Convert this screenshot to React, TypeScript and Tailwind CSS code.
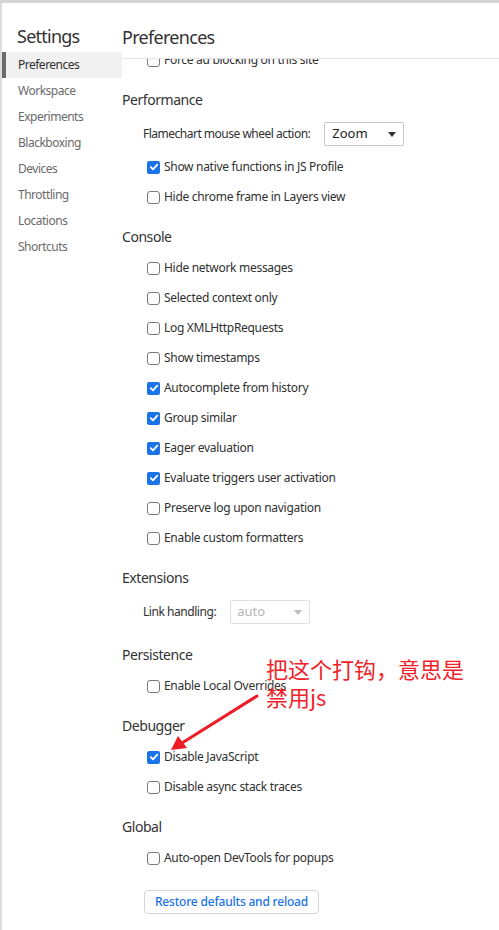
import React from "react";

const FONT = { fontFamily: '"Noto Sans", "Open Sans", sans-serif' };

function Check({ checked }: { checked?: boolean }) {
  if (checked) {
    return (
      <span className="flex h-[13px] w-[13px] shrink-0 items-center justify-center rounded-[2px] bg-[#1a73e8]">
        <svg width="10" height="10" viewBox="0 0 10 10">
          <path d="M1.8 5.2 L4 7.4 L8.3 2.6" fill="none" stroke="#fff" strokeWidth="1.8" strokeLinecap="round" strokeLinejoin="round" />
        </svg>
      </span>
    );
  }
  return <span className="h-[13px] w-[13px] shrink-0 rounded-[3px] border border-[#7a7a7a] bg-white" />;
}

function Row({ label, checked }: { label: string; checked?: boolean }) {
  return (
    <div className="flex h-[30px] items-center pl-[25px]">
      <Check checked={checked} />
      <span className="ml-[4px] text-[12px] tracking-[-0.3px] text-[#303030]">{label}</span>
    </div>
  );
}

function Heading({ title }: { title: string }) {
  return (
    <div className="pb-[7px] pt-[16px]">
      <div className="h-[18px] text-[14px] leading-[18px] tracking-[-0.45px] text-[#333]">{title}</div>
    </div>
  );
}

function Caret({ color }: { color: string }) {
  return (
    <svg width="8" height="5" viewBox="0 0 8 5">
      <path d="M0 0 L8 0 L4 5 Z" fill={color} />
    </svg>
  );
}

export default function App() {
  const nav = ["Preferences", "Workspace", "Experiments", "Blackboxing", "Devices", "Throttling", "Locations", "Shortcuts"];
  return (
    <div className="relative h-[930px] w-[499px] overflow-hidden border-t-[3px] border-[#d4d4d4] bg-white" style={FONT}>
      <div className="flex h-full border-l-2 border-[#dcdcdc]">
        <div className="w-[120px] shrink-0">
          <div className="pl-[15px] pt-[22px] text-[18px] leading-[22px] tracking-[-0.75px] text-[#333]">Settings</div>
          <div className="mt-[5px]">
            {nav.map((n, i) => (
              <div
                key={n}
                className={
                  i === 0
                    ? "flex h-[26px] items-center border-l-[4px] border-[#6b6b6b] bg-[#f1f1f1] pl-[12px] text-[12px] tracking-[-0.5px] text-[#303030]"
                    : "flex h-[26px] items-center pl-[16px] text-[12px] tracking-[-0.5px] text-[#6a6a6a]"
                }
              >
                {n}
              </div>
            ))}
          </div>
        </div>
        <div className="flex min-w-0 flex-1 flex-col">
          <div className="h-[56px] shrink-0 border-b border-[#e3e3e3]">
            <div className="pt-[23px] text-[18px] leading-[22px] tracking-[-0.7px] text-[#333]">Preferences</div>
          </div>
          <div className="flex-1 overflow-hidden">
            <div className="-mt-[14px]">
              <Row label="Force ad blocking on this site" />
              <Heading title="Performance" />
              <div className="flex h-[36px] items-center pl-[21px]">
                <span className="text-[12px] tracking-[-0.5px] text-[#303030]">Flamechart mouse wheel action:</span>
                <div className="ml-[14px] flex h-[24px] w-[80px] items-center justify-between rounded-[2px] border border-[#c6c6c6] bg-white pl-[7px] pr-[7px]">
                  <span className="text-[13px] text-[#222]">Zoom</span>
                  <Caret color="#333" />
                </div>
              </div>
              <Row label="Show native functions in JS Profile" checked />
              <Row label="Hide chrome frame in Layers view" />
              <Heading title="Console" />
              <Row label="Hide network messages" />
              <Row label="Selected context only" />
              <Row label="Log XMLHttpRequests" />
              <Row label="Show timestamps" />
              <Row label="Autocomplete from history" checked />
              <Row label="Group similar" checked />
              <Row label="Eager evaluation" checked />
              <Row label="Evaluate triggers user activation" checked />
              <Row label="Preserve log upon navigation" />
              <Row label="Enable custom formatters" />
              <Heading title="Extensions" />
              <div className="flex h-[36px] items-center pl-[21px]">
                <span className="text-[12px] tracking-[-0.45px] text-[#303030]">Link handling:</span>
                <div className="ml-[14px] flex h-[24px] w-[80px] items-center justify-between rounded-[2px] border border-[#e0e0e0] bg-white pl-[6px] pr-[7px]">
                  <span className="text-[13px] text-[#b4b4b4]">auto</span>
                  <Caret color="#bdbdbd" />
                </div>
              </div>
              <Heading title="Persistence" />
              <Row label="Enable Local Overrides" />
              <Heading title="Debugger" />
              <Row label="Disable JavaScript" checked />
              <Row label="Disable async stack traces" />
              <Heading title="Global" />
              <Row label="Auto-open DevTools for popups" />
              <div className="pl-[22px] pt-[17px]">
                <button className="flex h-[24px] w-[175px] items-center justify-center rounded-[4px] border border-[#d6d6d6] bg-white text-[12px] font-medium tracking-[-0.2px] text-[#1a73e8]">
                  Restore defaults and reload
                </button>
              </div>
            </div>
          </div>
        </div>
      </div>

      <div
        className="absolute left-[266px] top-[651px] text-[22px] leading-[28px] text-[#f0232a]"
        style={{ fontFamily: '"Noto Sans CJK SC", "Noto Sans", sans-serif' }}
      >
        <div>把这个打钩，意思是</div>
        <div>禁用js</div>
      </div>
      <svg className="absolute left-0 top-0" width="499" height="930" viewBox="0 0 499 930">
        <line x1="257" y1="693" x2="182" y2="740" stroke="#ee1c25" strokeWidth="3" strokeLinecap="round" />
        <path d="M171 747 L178 733 L187 745 Z" fill="#ee1c25" />
      </svg>
    </div>
  );
}
